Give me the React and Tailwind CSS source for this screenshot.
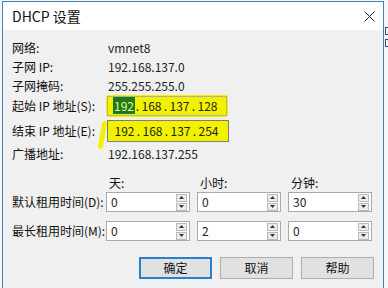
import { Fragment } from "react";

// Windows-style "DHCP 设置" dialog, with the yellow marker scribbles from the screenshot.
const FONT = "font-['Noto_Sans_CJK_SC','Noto_Sans',sans-serif]";

function Row({ label, className = "", children }) {
  return (
    <div className={`flex items-center ${className}`}>
      <span className="w-[96px] shrink-0 text-[#111]">{label}</span>
      {children}
    </div>
  );
}

function IpField({ parts, selectFirst = false, className = "" }) {
  return (
    <div className={`flex h-[20px] w-[120px] items-center border pl-[5px] ${className}`}>
      {parts.map((p, i) => (
        <Fragment key={i}>
          {i > 0 && <span className="w-[7px] text-center">.</span>}
          <span className="w-[21px] text-center">
            {selectFirst && i === 0 ? (
              <span className="bg-[#1f7a12] px-[1px] text-[#eef3b0]">{p}</span>
            ) : (
              p
            )}
          </span>
        </Fragment>
      ))}
    </div>
  );
}

function Arrow({ up }) {
  return (
    <div className="flex h-[8px] w-[11px] items-center justify-center border border-[#b9b9b9] bg-[#ececec]">
      <svg width="5" height="3" viewBox="0 0 5 3">
        <polygon points={up ? "2.5,0 5,3 0,3" : "0,0 5,0 2.5,3"} fill="#333" />
      </svg>
    </div>
  );
}

function Spin({ value }) {
  return (
    <div className="flex h-[20px] w-[84px] items-center border border-[#a9a9a9] bg-white">
      <span className="flex-1 pl-[4px]">{value}</span>
      <div className="mr-[2px] flex flex-col gap-[1px]">
        <Arrow up />
        <Arrow />
      </div>
    </div>
  );
}

function Button({ children, primary = false }) {
  return (
    <div
      className={
        "flex h-[22px] w-[73px] items-center justify-center bg-[#e1e1e1] text-[#111] " +
        (primary ? "border-2 border-[#2a7fd0]" : "border border-[#adadad]")
      }
    >
      {children}
    </div>
  );
}

export default function App() {
  return (
    <div className={`relative h-[288px] w-[388px] overflow-hidden bg-[#f4f7fa] text-[12px] ${FONT}`}>
      {/* clipped bits of the window behind, peeking out on the right */}
      <div className="absolute left-[385px] top-[27px] h-[8px] w-[3px] border-y border-l border-[#2a4a80]" />
      <div className="absolute left-[385px] top-[39px] h-[8px] w-[3px] border-y border-l border-[#2a4a80]" />

      <div className="ml-[2px] mt-[1px] h-[300px] w-[382px] border border-[#4a7fb3] bg-[#f0f0f0]">
        <div className="flex h-[28px] items-center justify-between bg-white pl-[9px] pr-[8px]">
          <span className="text-[14px] text-[#111]">DHCP 设置</span>
          <svg width="11" height="11" viewBox="0 0 11 11">
            <path d="M0.5 0.5 L10.5 10.5 M10.5 0.5 L0.5 10.5" stroke="#222" strokeWidth="1" />
          </svg>
        </div>

        <div className="relative px-[9px] pt-[8px] text-[#222]">
          <Row label="网络:" className="h-[19px]">
            <span>vmnet8</span>
          </Row>
          <Row label="子网 IP:" className="h-[19px]">
            <span>192.168.137.0</span>
          </Row>
          <Row label="子网掩码:" className="h-[19px]">
            <span>255.255.255.0</span>
          </Row>

          <Row label="起始 IP 地址(S):" className="mt-[1px] h-[20px]">
            <div className="-ml-[2px] rounded-[3px] bg-[#f2f200] p-[2px]">
              <IpField
                parts={["192", "168", "137", "128"]}
                selectFirst
                className="-m-[1px] border-[#b3b38a] bg-[#f2f200]"
              />
            </div>
          </Row>

          <Row label="结束 IP 地址(E):" className="mt-[5px] h-[20px]">
            <div className="-ml-[1px] border border-[#7d7d7d] bg-white p-[1px]">
              <IpField
                parts={["192", "168", "137", "254"]}
                className="-m-[1px] w-[118px] border-transparent bg-[#f2f200]"
              />
            </div>
          </Row>
          {/* marker stroke left of the end-address field */}
          <span className="absolute left-[97px] top-[91px] h-[28px] w-[5px] rotate-[10deg] rounded-full bg-[#f2f200]" />

          <Row label="广播地址:" className="mt-[2px] h-[21px]">
            <span>192.168.137.255</span>
          </Row>

          <div className="mt-[10px] flex h-[18px] items-center pl-[97px] text-[#111]">
            <span className="w-[91px]">天:</span>
            <span className="w-[91px]">小时:</span>
            <span>分钟:</span>
          </div>

          <Row label="默认租用时间(D):" className="h-[20px]">
            <div className="-ml-[2px] flex gap-[7px]">
              <Spin value="0" />
              <Spin value="0" />
              <Spin value="30" />
            </div>
          </Row>
          <Row label="最长租用时间(M):" className="mt-[9px] h-[20px]">
            <div className="-ml-[2px] flex gap-[7px]">
              <Spin value="0" />
              <Spin value="2" />
              <Spin value="0" />
            </div>
          </Row>

          <div className="mt-[16px] flex justify-end gap-[8px]">
            <Button primary>确定</Button>
            <Button>取消</Button>
            <Button>帮助</Button>
          </div>
        </div>
      </div>
    </div>
  );
}
